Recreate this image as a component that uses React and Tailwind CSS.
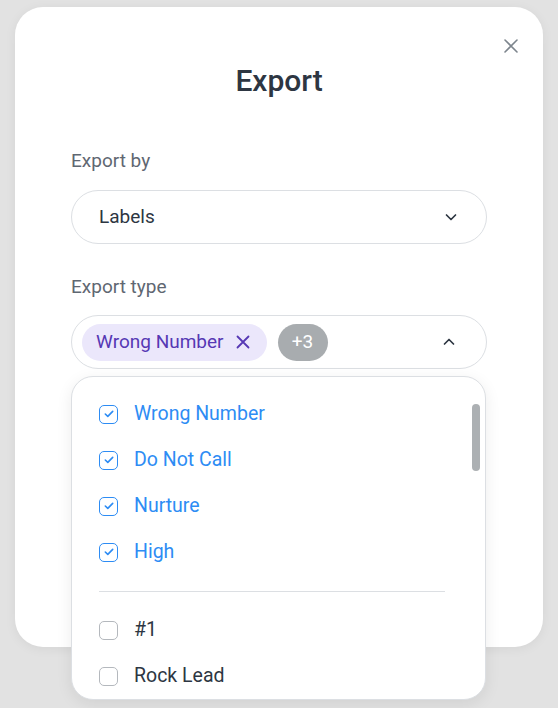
import React from "react";

const checked = ["Wrong Number", "Do Not Call", "Nurture", "High"];
const unchecked = ["#1", "Rock Lead"];

function Chevron({ up = false }) {
    return (
        <svg width="14" height="14" viewBox="0 0 14 14" fill="none" className={up ? "rotate-180" : ""}>
            <path d="M2.5 5l4.5 4.5L11.5 5" stroke="#2d3642" strokeWidth="1.7" strokeLinecap="round" strokeLinejoin="round" />
        </svg>
    );
}

function CheckBox({ on }) {
    return (
        <span
            className={`w-[19px] h-[19px] rounded-[5px] border-[1.5px] flex items-center justify-center shrink-0 ${on ? "border-[#2d8cf4]" : "border-[#b4b8bd]"}`}
        >
            {on && (
                <svg width="12" height="12" viewBox="0 0 12 12" fill="none">
                    <path d="M2.3 6l2.5 2.4L9.7 3.4" stroke="#2d8cf4" strokeWidth="1.6" strokeLinecap="round" strokeLinejoin="round" />
                </svg>
            )}
        </span>
    );
}

export default function App() {
    return (
        <div className="w-full h-[708px] bg-[#e2e2e2] pt-[7px] pl-[15px] overflow-hidden" style={{ fontFamily: "Roboto, 'Noto Sans', sans-serif" }}>
            {/* Modal */}
            <div className="relative w-[528px] h-[640px] bg-white rounded-[28px] shadow-[0_2px_12px_rgba(0,0,0,0.06)] px-[56px] pt-[57px]">
                <button className="absolute top-[31px] right-[24px] text-[#7d858d]">
                    <svg width="16" height="16" viewBox="0 0 16 16" fill="none">
                        <path d="M2 2l12 12M14 2L2 14" stroke="currentColor" strokeWidth="1.6" strokeLinecap="round" />
                    </svg>
                </button>

                <h1 className="text-center text-[30px] leading-[34px] font-medium text-[#2d3642]">Export</h1>

                <div className="mt-[51px] text-[19px] leading-[24px] text-[#5f6772]">Export by</div>
                <div className="mt-[17px] h-[54px] rounded-full border border-[#dcdfe3] flex items-center justify-between pl-[27px] pr-[28px]">
                    <span className="text-[19px] text-[#2d3642]">Labels</span>
                    <Chevron />
                </div>

                <div className="mt-[31px] text-[19px] leading-[24px] text-[#5f6772]">Export type</div>
                <div className="relative mt-[16px]">
                    <div className="h-[54px] rounded-full border border-[#dcdfe3] flex items-center pl-[10px] pr-[30px]">
                        <span className="h-[37px] rounded-full bg-[#ebe7fb] text-[#5638b4] text-[19px] flex items-center pl-[14px] pr-[17px] gap-[12px]">
                            Wrong Number
                            <svg width="14" height="14" viewBox="0 0 14 14" fill="none">
                                <path d="M1.5 1.5l11 11M12.5 1.5l-11 11" stroke="currentColor" strokeWidth="1.8" strokeLinecap="round" />
                            </svg>
                        </span>
                        <span className="ml-[11px] h-[37px] w-[50px] rounded-full bg-[#a8acaf] text-white text-[19px] flex items-center justify-center">+3</span>
                        <span className="ml-auto">
                            <Chevron up />
                        </span>
                    </div>

                    {/* Dropdown menu */}
                    <div className="absolute left-0 top-[61px] w-[415px] h-[324px] bg-white rounded-[22px] border border-[#dcdfe3] shadow-[0_4px_16px_rgba(0,0,0,0.08)] overflow-hidden z-10">
                        <div className="absolute right-[5px] top-[27px] w-[8px] h-[67px] rounded-full bg-[#acb0b3]" />
                        <div className="pt-[14px] pl-[27px] pr-[40px]">
                            {checked.map((label) => (
                                <div key={label} className="h-[46px] flex items-center gap-[16px]">
                                    <CheckBox on />
                                    <span className="text-[19.5px] text-[#2d8cf4]">{label}</span>
                                </div>
                            ))}
                            <div className="h-[32px] flex items-center">
                                <div className="w-full h-px bg-[#dcdfe3]" />
                            </div>
                            {unchecked.map((label) => (
                                <div key={label} className="h-[46px] flex items-center gap-[16px]">
                                    <CheckBox />
                                    <span className="text-[19.5px] text-[#2d3642]">{label}</span>
                                </div>
                            ))}
                        </div>
                    </div>
                </div>
            </div>
        </div>
    );
}
